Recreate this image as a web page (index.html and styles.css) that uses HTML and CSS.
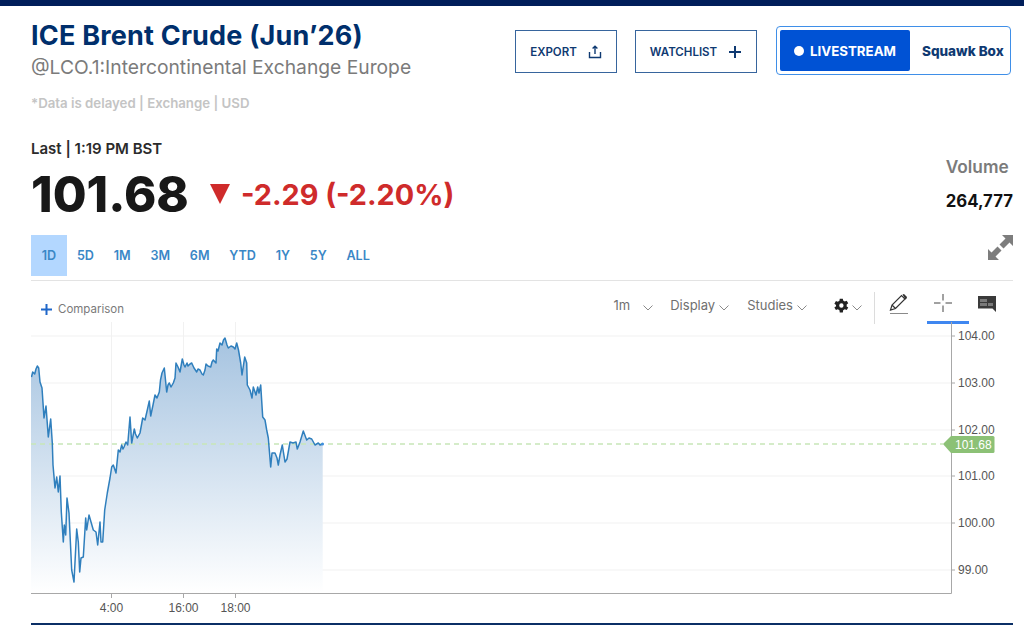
FILE: index.html
```html
<!DOCTYPE html>
<html lang="en">
<head>
    <meta charset="UTF-8">
    <meta name="viewport" content="width=device-width, initial-scale=1.0">
    <title>ICE Brent Crude (Jun'26)</title>
    <link rel="stylesheet" href="styles.css">
</head>
<body>
    <div class="top-bar"></div>
    <div class="page">
        <div class="head">
            <div class="head-text">
                <h1 class="title">ICE Brent Crude (Jun’26)</h1>
                <div class="exchange">@LCO.1:Intercontinental Exchange Europe</div>
                <div class="delayed">*Data is delayed | Exchange | USD</div>
            </div>
            <div class="head-actions">
                <button class="action action-export" type="button">EXPORT
                    <svg class="action-icon" viewBox="0 0 14 14"><path d="M7 9V1.500M4.600 3.600 7 1.200l2.400 2.400M1.500 7v5.500h11V7" fill="none" stroke="#0f3a72" stroke-width="1.400"/></svg>
                </button>
                <button class="action action-watch" type="button">WATCHLIST
                    <svg class="action-icon" viewBox="0 0 14 14"><path d="M7 1v12M1 7h12" fill="none" stroke="#0f3a72" stroke-width="2"/></svg>
                </button>
                <div class="stream">
                    <div class="stream-live"><span class="stream-dot"></span>LIVESTREAM</div>
                    <div class="stream-other">Squawk Box</div>
                </div>
            </div>
        </div>

        <div class="quote">
            <div>
                <div class="last">Last | 1:19 PM BST</div>
                <div class="price-row">
                    <span class="price">101.68</span>
                    <span class="arrow"></span>
                    <span class="change">-2.29 (-2.20%)</span>
                </div>
            </div>
            <div class="volume">
                <div class="volume-label">Volume</div>
                <div class="volume-value">264,777</div>
            </div>
        </div>

        <div class="ranges">
            <a class="range range-on">1D</a>
            <a class="range">5D</a>
            <a class="range">1M</a>
            <a class="range">3M</a>
            <a class="range">6M</a>
            <a class="range">YTD</a>
            <a class="range">1Y</a>
            <a class="range">5Y</a>
            <a class="range">ALL</a>
            <svg class="expand" viewBox="0 0 25 25"><path d="M14 0h11v11l-3.500-3.500-6 6-4-4 6-6zM11 25H0V14l3.500 3.500 6-6 4 4-6 6z" fill="#7d7d7d"/></svg>
        </div>

        <div class="tools">
            <div class="compare">
                <svg class="compare-plus" viewBox="0 0 11 11"><path d="M5.500 0v11M0 5.500h11" fill="none" stroke="#1f67c9" stroke-width="2"/></svg>
                Comparison
            </div>
            <div class="tool-list">
                <span class="tool tool-period">1m<svg class="chev chev-wide" viewBox="0 0 10 6"><path d="M.5.5 5 5 9.500.5" fill="none" stroke="#8a8a8a"/></svg></span>
                <span class="tool tool-display">Display<svg class="chev" viewBox="0 0 10 6"><path d="M.5.5 5 5 9.500.5" fill="none" stroke="#8a8a8a"/></svg></span>
                <span class="tool tool-studies">Studies<svg class="chev" viewBox="0 0 10 6"><path d="M.5.5 5 5 9.500.5" fill="none" stroke="#8a8a8a"/></svg></span>
                <span class="tool tool-gear">
                    <svg class="gear" viewBox="0 0 24 24"><path fill-rule="evenodd" d="M19.400 13.500c.1-.5.1-1 .1-1.500s0-1-.1-1.500l2.600-2-2.500-4.300-3.100 1.200c-.8-.6-1.600-1.100-2.600-1.500L13.300 1h-4.900l-.5 3.400c-.9.400-1.800.9-2.600 1.500L2.300 4.700-.2 9l2.700 2c0 .3-.1.700-.1 1s0 .7.100 1L-.2 15l2.500 4.300 3 -1.200c.8.600 1.700 1.100 2.600 1.500l.5 3.400h4.900l.5-3.400c1-.4 1.800-.9 2.600-1.500l3.100 1.200 2.500-4.300zM11 15.500a3.500 3.500 0 1 1 0-7 3.500 3.500 0 0 1 0 7z" fill="#222" transform="translate(.8 0)"/></svg>
                    <svg class="chev" viewBox="0 0 10 6"><path d="M.5.5 5 5 9.500.5" fill="none" stroke="#8a8a8a"/></svg>
                </span>
                <span class="tool-sep"></span>
                <span class="tool-icon tool-icon-draw">
                    <svg class="draw" viewBox="0 0 20 20"><path d="M1.500 16 3 11 12.500 1.500l3.500 3.500L6.500 14.500zM3 11l3.500 3.500" fill="none" stroke="#333" stroke-width="1.200"/><path d="M13.500 .5 15 0l3 3-.4 1.500-1.100 1z" fill="#333"/><path d="M1 19.500h18" fill="none" stroke="#8a8a8a"/></svg>
                </span>
                <span class="tool-icon tool-icon-on">
                    <svg class="cross" viewBox="0 0 18 18"><path d="M9 0v6.500M9 11.500V18M0 9h6.500M11.500 9H18" fill="none" stroke="#444" stroke-width="1"/></svg>
                </span>
                <span class="tool-icon tool-icon-note">
                    <svg class="note" viewBox="0 0 18 16"><path d="M0 0h18v16l-3.500-3.500H0z" fill="#3a3a3a"/><path d="M2 3h7v3H2zM2 7h7v3H2zM10 7h5v3h-5z" fill="#7a7a7a"/></svg>
                </span>
            </div>
        </div>

        <svg class="chart" viewBox="31 322 982 301">
            <defs>
                <linearGradient id="areaFill" gradientUnits="userSpaceOnUse" x1="0" y1="336" x2="0" y2="593">
                    <stop offset="0" stop-color="#a5c3e0"/>
                    <stop offset="1" stop-color="#ffffff"/>
                </linearGradient>
            </defs>
            <g class="grid">
                <path d="M31 336H951M31 383H951M31 430H951M31 476H951M31 523H951M31 570H951"/>
                <path d="M111.500 322V593M183.500 322V593M235.500 322V593"/>
            </g>
            <path class="area" fill="url(#areaFill)" d="M31 593V377L32.700 372 34.700 374 36 369 37.300 366 38.700 368 40 382 42 388 44 418 46 406 48.300 437 50.700 419 52.300 443 53 465 55 488 56.700 477 58.300 492 60 476 61.300 512 63.300 542 64.300 525 65.700 535 67 498 69 513 71.700 570 74 582 76.700 529 78.300 542 79.700 572 81 558 83.300 557 85.700 518 86.700 530 89 515 93.300 530 96 532 97.700 545 100 522 101 542 102.700 542 104.700 510 107.300 493 110 478 111.700 467 113.300 465 116 473 118.300 450 120 452 121.700 445 123 449 124 447 126 442 127.700 445 130 417 131.700 443 134.300 429 135.500 434 137.300 438 140 433 142.700 418 145 420 147.300 410 149.300 401 150.700 416 153 405 155 395 157 398 159.300 392 160.500 380 162 373 164.300 368 166.700 392 168 385 169.300 383 171 387 173.300 383 175 378 176 363 178 367 180 372 182.300 359 184 365 185 367 187 363 188 366 190 364 191.700 363 194 368 196.700 372 198 369 200 370 202 374 203.300 375 205 370 206 364 208 366 210.700 367 212 362 213.300 360 216 363 216.700 349 218 351 220 343 222 345 223.500 340 225 338 227 345 228.300 348 231 346 233.300 347 235 349 236.700 343 238.500 350 240.700 363 242 375 244.700 357 246.700 363 247.300 385 250 390 252 398 253.300 387 256 395 257.700 387 259 393 260.700 385 262.700 417 265 420 266.700 430 268.300 438 270.700 467 272 453 275 453 277 458 278.300 465 280 455 282.300 445 285 462 287 459 290 442 293 443 296 442 297.300 449 300 442 303.300 431 306.700 440 309 438 311.700 439 315 445 318.300 443 320 445 322.700 444V593z"/>
            <path class="dash" d="M31 444H943"/>
            <path class="line" d="M31.500 377L32.700 372 34.700 374 36 369 37.300 366 38.700 368 40 382 42 388 44 418 46 406 48.300 437 50.700 419 52.300 443 53 465 55 488 56.700 477 58.300 492 60 476 61.300 512 63.300 542 64.300 525 65.700 535 67 498 69 513 71.700 570 74 582 76.700 529 78.300 542 79.700 572 81 558 83.300 557 85.700 518 86.700 530 89 515 93.300 530 96 532 97.700 545 100 522 101 542 102.700 542 104.700 510 107.300 493 110 478 111.700 467 113.300 465 116 473 118.300 450 120 452 121.700 445 123 449 124 447 126 442 127.700 445 130 417 131.700 443 134.300 429 135.500 434 137.300 438 140 433 142.700 418 145 420 147.300 410 149.300 401 150.700 416 153 405 155 395 157 398 159.300 392 160.500 380 162 373 164.300 368 166.700 392 168 385 169.300 383 171 387 173.300 383 175 378 176 363 178 367 180 372 182.300 359 184 365 185 367 187 363 188 366 190 364 191.700 363 194 368 196.700 372 198 369 200 370 202 374 203.300 375 205 370 206 364 208 366 210.700 367 212 362 213.300 360 216 363 216.700 349 218 351 220 343 222 345 223.500 340 225 338 227 345 228.300 348 231 346 233.300 347 235 349 236.700 343 238.500 350 240.700 363 242 375 244.700 357 246.700 363 247.300 385 250 390 252 398 253.300 387 256 395 257.700 387 259 393 260.700 385 262.700 417 265 420 266.700 430 268.300 438 270.700 467 272 453 275 453 277 458 278.300 465 280 455 282.300 445 285 462 287 459 290 442 293 443 296 442 297.300 449 300 442 303.300 431 306.700 440 309 438 311.700 439 315 445 318.300 443 320 445 322.700 444"/>
            <circle class="line-end" cx="322.500" cy="444" r="1.500"/>
            <path class="axis" d="M951.500 322V593.500H31M951 336h4M951 383h4M951 430h4M951 476h4M951 523h4M951 570h4M111.500 593v5M183.500 593v5M235.500 593v5"/>
            <g class="axis-text">
                <text x="958" y="340">104.00</text>
                <text x="958" y="387">103.00</text>
                <text x="958" y="434">102.00</text>
                <text x="958" y="480">101.00</text>
                <text x="958" y="527">100.00</text>
                <text x="958" y="574">99.00</text>
                <text x="111.500" y="612" text-anchor="middle">4:00</text>
                <text x="183.500" y="612" text-anchor="middle">16:00</text>
                <text x="235.500" y="612" text-anchor="middle">18:00</text>
            </g>
            <path class="tag" d="M943 444 951 436H993q1.500 0 1.500 1.500V451.500q0 1.500-1.500 1.500H951z"/>
            <text class="tag-text" x="955" y="449">101.68</text>
        </svg>
        <div class="foot-line"></div>
    </div>
</body>
</html>
```

FILE: styles.css
```css
body {
    margin: 0;
    background-color: white;
    font-family: Inter, "Liberation Sans", sans-serif;
    overflow: hidden;
}
.top-bar {
    height: 6px;
    background-color: #001e5a;
}
.page {
    padding: 0 11px 0 31px;
}

/* header */
.head {
    display: flex;
    justify-content: space-between;
    height: 133px;
}
.title {
    margin: 14px 0 0;
    font-size: 27px;
    line-height: 32px;
    font-weight: 700;
    letter-spacing: 0.2px;
    color: #002f6c;
}
.exchange {
    margin-top: 3px;
    font-size: 19.250px;
    line-height: 24px;
    color: #7b7b7b;
}
.delayed {
    margin-top: 16px;
    font-size: 13.250px;
    line-height: 16px;
    font-weight: 600;
    color: #c4c4c4;
}
.head-actions {
    display: flex;
    align-items: flex-start;
    margin-top: 20px;
    margin-right: 2px;
}
.action {
    display: flex;
    align-items: center;
    justify-content: center;
    height: 43px;
    margin-top: 4px;
    padding: 0;
    background-color: white;
    border: 1px solid #37659d;
    font-family: inherit;
    font-size: 11.500px;
    font-weight: 600;
    color: #0f3a72;
}
.action-export {
    width: 102px;
    gap: 11px;
}
.action-watch {
    width: 122px;
    margin-left: 18px;
    gap: 11px;
}
.action-icon {
    width: 14px;
    height: 14px;
}
.stream {
    display: flex;
    align-items: center;
    box-sizing: border-box;
    width: 235px;
    height: 49px;
    margin-left: 19px;
    padding: 3px;
    border: 1px solid #3f8fe8;
    border-radius: 4px;
}
.stream-live {
    display: flex;
    align-items: center;
    justify-content: center;
    gap: 6px;
    width: 130px;
    height: 41px;
    background-color: #0052d4;
    border-radius: 2px;
    font-size: 13.300px;
    font-weight: 700;
    color: white;
}
.stream-dot {
    width: 10px;
    height: 10px;
    border-radius: 50%;
    background-color: white;
}
.stream-other {
    margin-left: 12px;
    font-size: 13.500px;
    font-weight: 800;
    color: #0f3a72;
    white-space: nowrap;
}

/* quote */
.quote {
    display: flex;
    justify-content: space-between;
    height: 96px;
}
.last {
    font-size: 15px;
    line-height: 20px;
    font-weight: 600;
    color: #2b2b2b;
}
.price-row {
    display: flex;
    align-items: center;
    height: 52px;
    margin-top: 9px;
}
.price {
    font-size: 49px;
    font-weight: 800;
    color: #181818;
}
.arrow {
    width: 0;
    height: 0;
    margin: 0 11px 0 21px;
    border-left: 10.500px solid transparent;
    border-right: 10.500px solid transparent;
    border-top: 20px solid #cf2b2b;
}
.change {
    font-size: 28.800px;
    font-weight: 700;
    color: #cf2b2b;
}
.volume {
    padding-top: 17px;
}
.volume-label {
    font-size: 17.300px;
    line-height: 22px;
    font-weight: 600;
    color: #7b7b7b;
}
.volume-value {
    margin-top: 12px;
    font-size: 16.750px;
    line-height: 22px;
    font-weight: 700;
    color: #111;
}

/* range row */
.ranges {
    display: flex;
    align-items: flex-start;
    height: 45px;
    border-bottom: 1px solid #e3e3e3;
}
.range {
    display: flex;
    align-items: center;
    justify-content: center;
    box-sizing: border-box;
    height: 41px;
    padding: 0 9.900px 1px;
    font-size: 12.600px;
    font-weight: 600;
    color: #3a87c6;
}
.range-on {
    width: 36px;
    background-color: #b3d7ff;
}
.expand {
    width: 25px;
    height: 25px;
    margin-left: auto;
}

/* chart toolbar */
.tools {
    display: flex;
    justify-content: space-between;
    align-items: flex-start;
    height: 41px;
}
.compare {
    display: flex;
    align-items: center;
    gap: 6px;
    margin: 19px 0 0 10px;
    height: 18px;
    font-size: 11.500px;
    color: #7a7a7a;
}
.compare-plus {
    width: 11px;
    height: 11px;
}
.tool-list {
    display: flex;
    align-items: flex-start;
    height: 43px;
    margin-right: 2px;
}
.tool {
    display: flex;
    align-items: center;
    gap: 4px;
    height: 48px;
    font-size: 13px;
    color: #707070;
}
.tool-period .chev-wide {
    margin-left: 9px;
}
.tool-display {
    margin-left: 17px;
}
.tool-studies {
    margin-left: 18px;
}
.tool-gear {
    margin-left: 27px;
    gap: 3px;
}
.chev {
    width: 10px;
    height: 6px;
    margin-top: 5px;
}
.gear {
    width: 15px;
    height: 15px;
}
.tool-sep {
    width: 1px;
    height: 32px;
    margin: 11px 10px 0 12px;
    background-color: #dcdcdc;
}
.tool-icon {
    display: flex;
    justify-content: center;
    box-sizing: border-box;
    width: 42px;
    height: 43px;
    padding-top: 13px;
}
.tool-icon-draw {
    padding-right: 14px;
}
.tool-icon-on {
    padding-right: 10px;
    border-bottom: 3px solid #3f87f0;
}
.tool-icon-note {
    padding-right: 6px;
}
.draw {
    width: 20px;
    height: 20px;
}
.cross {
    width: 18px;
    height: 18px;
}
.note {
    width: 18px;
    height: 16px;
    margin-top: 2px;
}

/* chart */
.chart {
    display: block;
    width: 982px;
    height: 301px;
}
.grid path {
    fill: none;
    stroke: #f1f1f1;
    stroke-width: 1;
}
.dash {
    fill: none;
    stroke: #c8e6b8;
    stroke-width: 1.500;
    stroke-dasharray: 5 4;
}
.line {
    fill: none;
    stroke: #2f7fbd;
    stroke-width: 1.500;
    stroke-linejoin: round;
}
.line-end {
    fill: #3f8fe0;
}
.axis {
    fill: none;
    stroke: #a8a8a8;
    stroke-width: 1;
}
.axis-text text {
    font-family: "Liberation Sans", sans-serif;
    font-size: 12px;
    fill: #555;
}
.tag {
    fill: #8cc176;
}
.tag-text {
    font-family: "Liberation Sans", sans-serif;
    font-size: 12px;
    fill: white;
}
.foot-line {
    height: 2px;
    background-color: #0b2f66;
}
```
